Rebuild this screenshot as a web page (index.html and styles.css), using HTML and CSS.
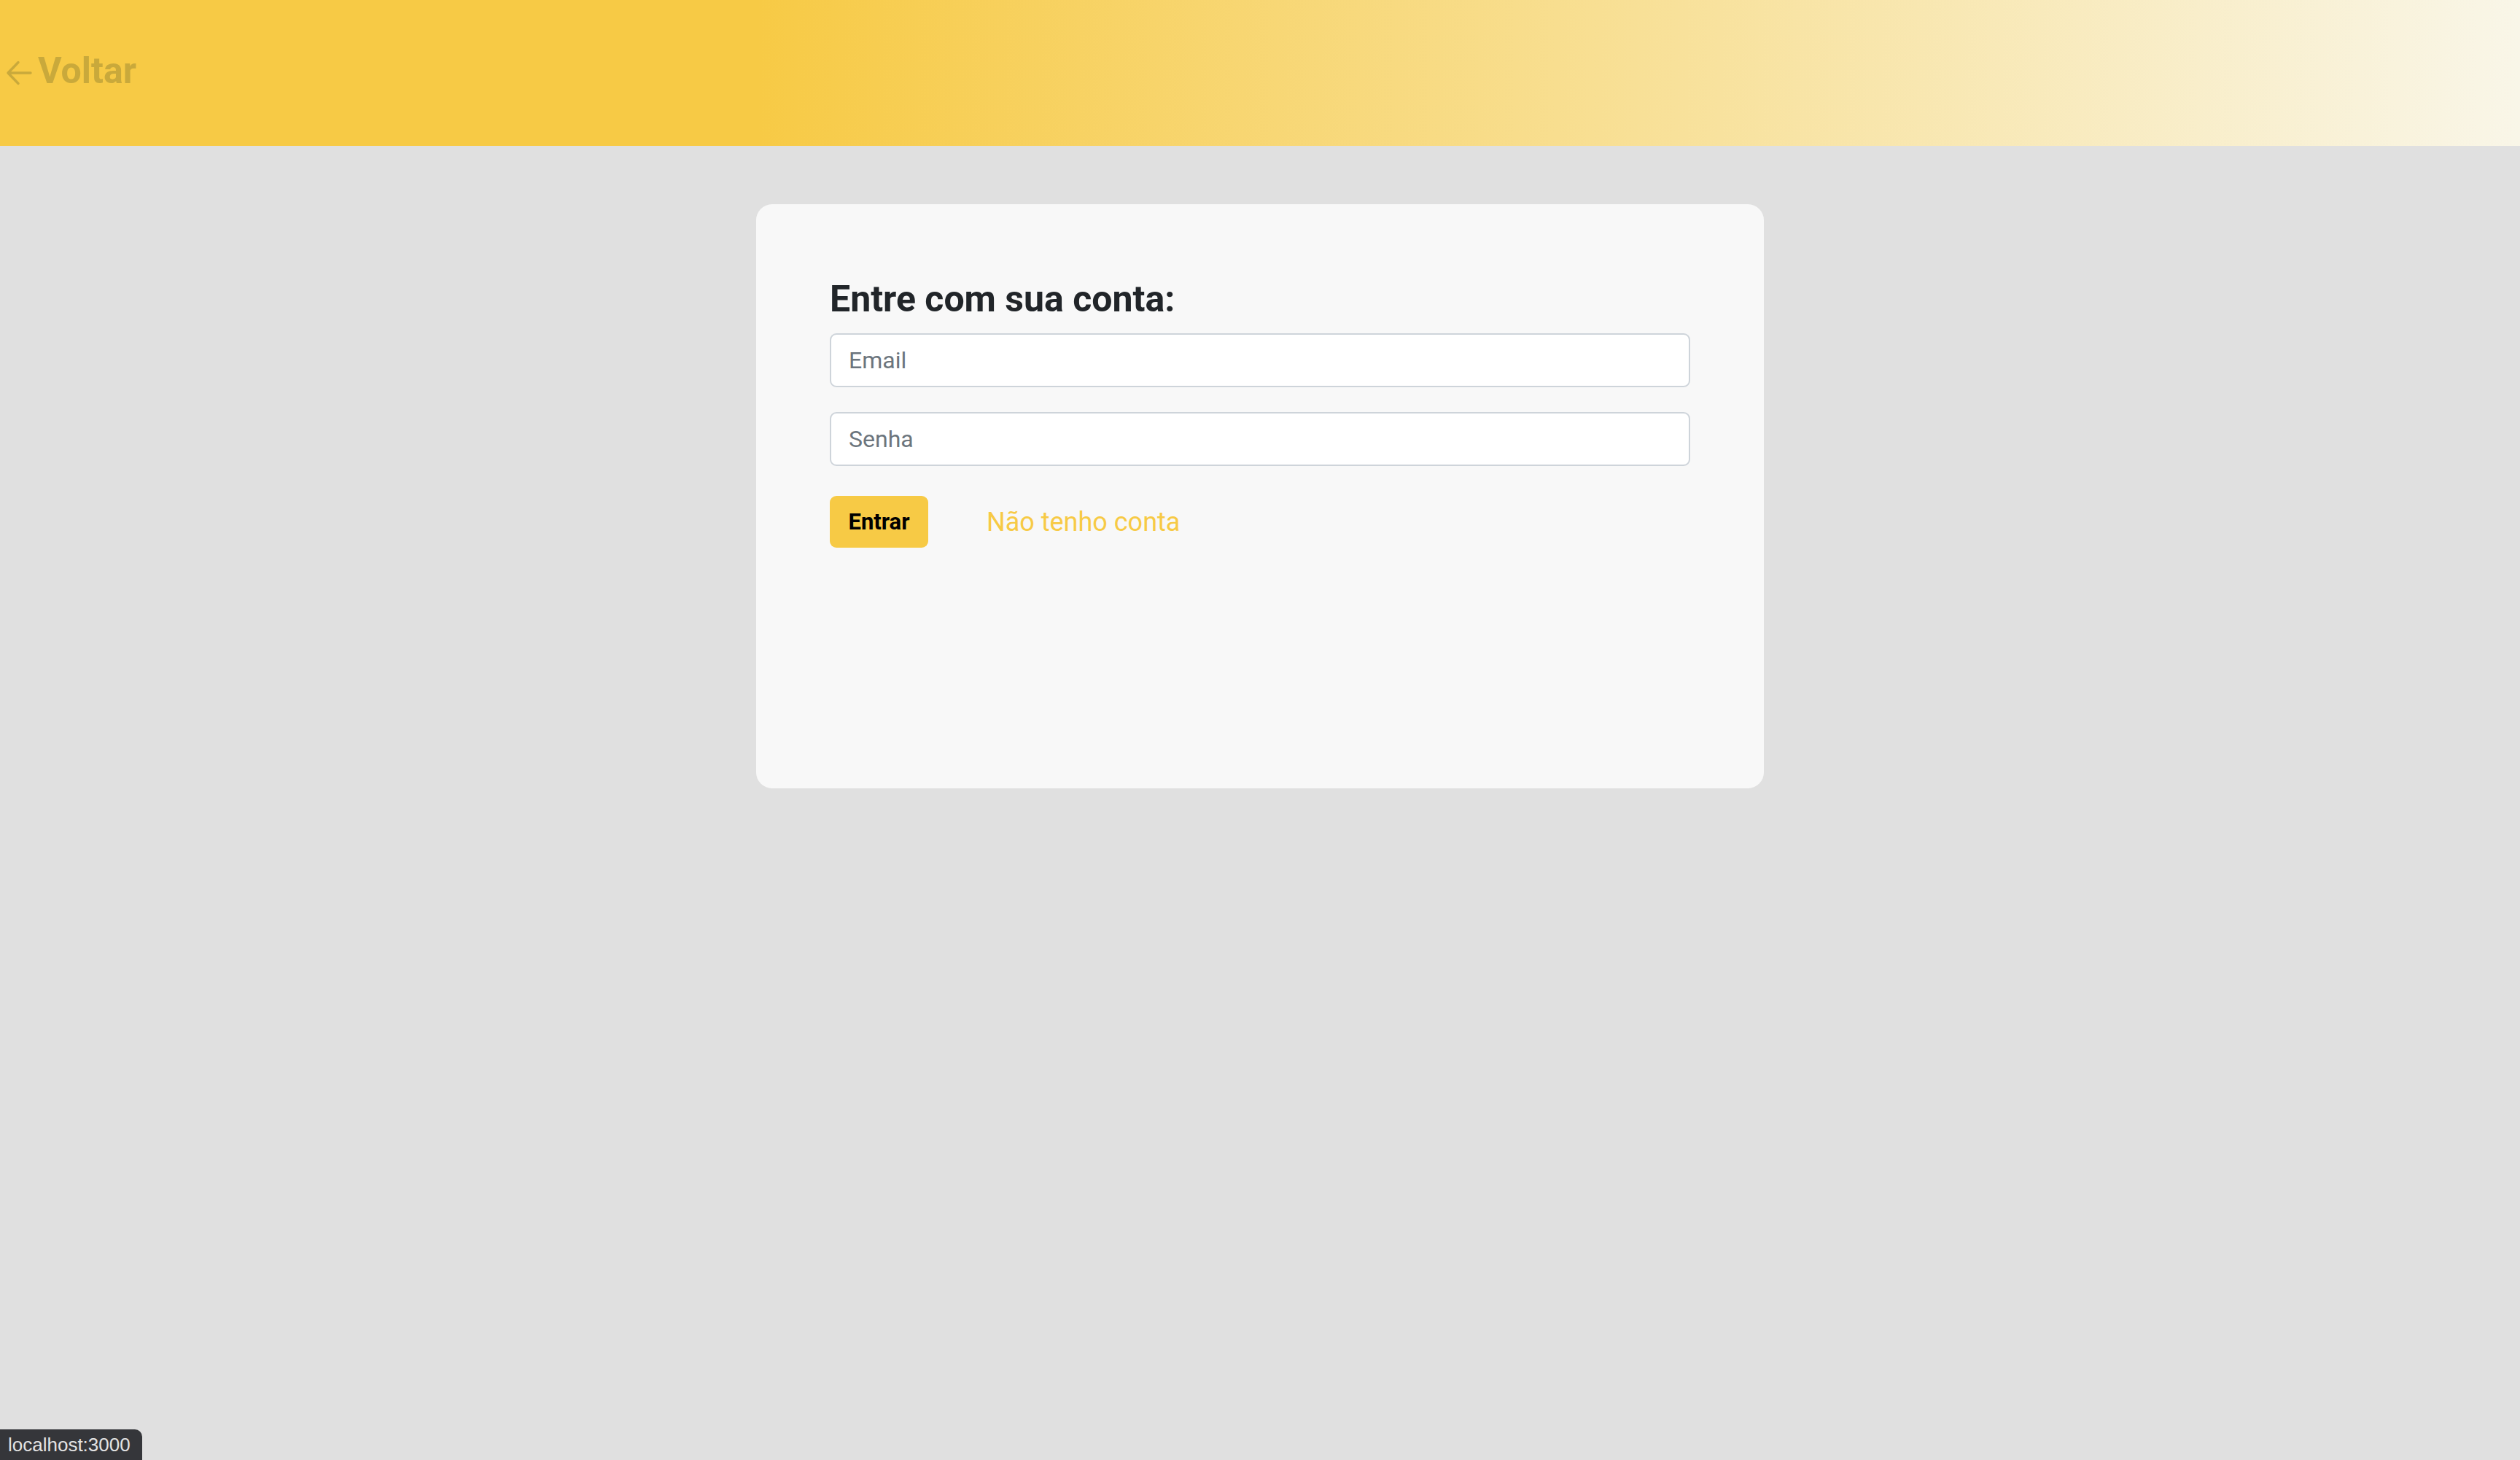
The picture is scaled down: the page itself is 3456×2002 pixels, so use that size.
FILE: index.html
```html
<!DOCTYPE html>
<html lang="pt-BR">
<head>
<meta charset="utf-8">
<title>Login</title>
<link rel="stylesheet" href="styles.css">
</head>
<body>
<header class="topbar">
  <a class="back" href="#">
    <svg class="back-icon" viewBox="0 0 36 36" width="36" height="36" aria-hidden="true">
      <path d="M34 18H3M3 18L17 3.5M3 18L17 32.5" fill="none" stroke="currentColor" stroke-width="3.4" stroke-linecap="round" stroke-linejoin="round"/>
    </svg>
    <span>Voltar</span>
  </a>
</header>
<main class="page">
  <section class="card">
    <h2 class="title">Entre com sua conta:</h2>
    <input class="field" type="email" placeholder="Email">
    <input class="field" type="password" placeholder="Senha">
    <div class="actions">
      <button class="btn" type="button">Entrar</button>
      <a class="link" href="#">Não tenho conta</a>
    </div>
  </section>
</main>
<div class="status">localhost:3000</div>
</body>
</html>
```

FILE: styles.css
```css
html, body {
  margin: 0;
  padding: 0;
}

body {
  background: #e0e0e0;
  font-family: Roboto, "Liberation Sans", Arial, sans-serif;
  min-height: 2002px;
}

.topbar {
  height: 200px;
  box-sizing: border-box;
  padding: 0 0 6px 8px;
  display: flex;
  align-items: center;
  background: linear-gradient(90deg, #f7ca45 0%, #f7ca45 30%, #f9f6e8 100%);
}

.back {
  display: flex;
  align-items: center;
  gap: 8px;
  color: #c9a93b;
  text-decoration: none;
  font-size: 50px;
  font-weight: 700;
}

.back-icon {
  display: block;
  margin-top: 6px;
}

.page {
  display: flex;
  justify-content: center;
  padding-top: 80px;
}

.card {
  width: 1382px;
  height: 801px;
  box-sizing: border-box;
  padding: 100px 101px;
  background: #f8f8f8;
  border-radius: 22px;
  display: flex;
  flex-direction: column;
}

.title {
  margin: 0 0 17px;
  font-size: 50px;
  line-height: 60px;
  font-weight: 700;
  color: #212529;
}

.field {
  display: block;
  width: 100%;
  height: 74px;
  box-sizing: border-box;
  margin: 0 0 34px;
  padding: 0 24px;
  border: 2px solid #ced4da;
  border-radius: 9px;
  background: #fff;
  font-family: Roboto, "Liberation Sans", Arial, sans-serif;
  font-size: 32px;
  color: #212529;
  outline: none;
}

.field::placeholder {
  color: #6c757d;
}

.actions {
  display: flex;
  align-items: center;
  gap: 80px;
  margin-top: 7px;
}

.btn {
  width: 135px;
  height: 71px;
  padding: 0;
  border: none;
  border-radius: 9px;
  background: #f7ca45;
  color: #000;
  font-family: Roboto, "Liberation Sans", Arial, sans-serif;
  font-size: 31px;
  font-weight: 700;
}

.link {
  color: #f7ca45;
  font-size: 36px;
  text-decoration: none;
}

.status {
  position: fixed;
  left: 0;
  bottom: 0;
  height: 42px;
  line-height: 42px;
  padding: 0 16px 0 11px;
  background: #35363a;
  color: #e3e3e3;
  border-top-right-radius: 10px;
  font-family: "Liberation Sans", Arial, sans-serif;
  font-size: 26px;
}
```
